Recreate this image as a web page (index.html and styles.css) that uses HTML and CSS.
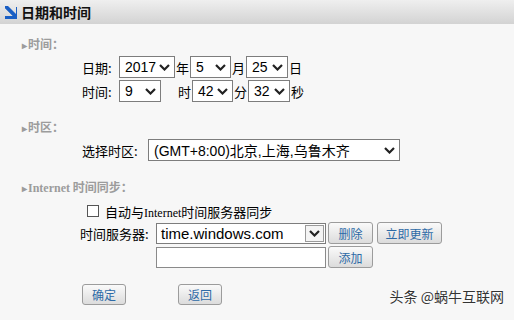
FILE: index.html
```html
<!DOCTYPE html>
<html lang="zh-CN">
  <head>
    <meta charset="UTF-8" />
    <title>日期和时间</title>
    <link rel="stylesheet" href="styles.css">
  </head>
  <body>
    <div class="header">
      <svg class="header-icon" width="12" height="13" viewBox="0 0 12 13">
        <path d="M0 0 L3 0 L11 8 L11 1 L12 1 L12 13 L0 13 L0 10 L8 10 L0 2 Z" fill="#1a5fc4" />
        <path d="M1 1 L10 10" stroke="#1a5fc4" stroke-width="3" />
      </svg>
      <span class="header-title">日期和时间</span>
    </div>

    <div class="main">
      <!-- time -->
      <div class="section-title"><span class="arrow">&#9656;</span>时间：</div>
      <div class="row first">
        <span class="label w-date">日期:</span>
        <div class="select w-56"><span>2017</span><svg class="chev" width="11" height="7" viewBox="0 0 11 7"><path d="M1 1 L5.5 5.5 L10 1" /></svg></div>
        <span class="unit">年</span>
        <div class="select w-41"><span>5</span><svg class="chev" width="11" height="7" viewBox="0 0 11 7"><path d="M1 1 L5.5 5.5 L10 1" /></svg></div>
        <span class="unit">月</span>
        <div class="select w-42"><span>25</span><svg class="chev" width="11" height="7" viewBox="0 0 11 7"><path d="M1 1 L5.5 5.5 L10 1" /></svg></div>
        <span class="unit">日</span>
      </div>
      <div class="row second">
        <span class="label w-date">时间:</span>
        <div class="select w-42"><span>9</span><svg class="chev" width="11" height="7" viewBox="0 0 11 7"><path d="M1 1 L5.5 5.5 L10 1" /></svg></div>
        <span class="unit spaced">时</span>
        <div class="select w-41"><span>42</span><svg class="chev" width="11" height="7" viewBox="0 0 11 7"><path d="M1 1 L5.5 5.5 L10 1" /></svg></div>
        <span class="unit">分</span>
        <div class="select w-42"><span>32</span><svg class="chev" width="11" height="7" viewBox="0 0 11 7"><path d="M1 1 L5.5 5.5 L10 1" /></svg></div>
        <span class="unit">秒</span>
      </div>

      <!-- time zone -->
      <div class="section-title zone"><span class="arrow">&#9656;</span>时区：</div>
      <div class="row first">
        <span class="label w-zone">选择时区:</span>
        <div class="select w-252"><span>(GMT+8:00)北京,上海,乌鲁木齐</span><svg class="chev" width="11" height="7" viewBox="0 0 11 7"><path d="M1 1 L5.5 5.5 L10 1" /></svg></div>
      </div>

      <!-- internet sync -->
      <div class="section-title sync"><span class="arrow">&#9656;</span><span class="serif">Internet</span> 时间同步：</div>
      <label class="check-row">
        <span class="checkbox"></span>
        <span>自动与<span class="serif small">Internet</span>时间服务器同步</span>
      </label>
      <div class="row server">
        <span class="label w-server">时间服务器:</span>
        <div class="combo">
          <span>time.windows.com</span>
          <span class="combo-btn"><svg class="chev" width="11" height="7" viewBox="0 0 11 7"><path d="M1 1 L5.5 5.5 L10 1" /></svg></span>
        </div>
        <button class="btn w-45">删除</button>
        <button class="btn w-65">立即更新</button>
      </div>
      <div class="row add">
        <input class="text-input" type="text" />
        <button class="btn w-45">添加</button>
      </div>

      <div class="actions">
        <button class="btn w-44">确定</button>
        <button class="btn w-44">返回</button>
      </div>
    </div>

    <div class="watermark">头条 @蜗牛互联网</div>
  </body>
</html>
```

FILE: styles.css
```css
body {
  margin: 0;
  background-color: #f7f7f7;
  font-family: "Noto Sans CJK SC", "Liberation Sans", sans-serif;
  font-size: 13px;
  color: #000;
  width: 514px;
  height: 320px;
  overflow: hidden;
  position: relative;
}

.header {
  height: 24px;
  display: flex;
  align-items: center;
  padding-left: 5px;
  gap: 4px;
  background: linear-gradient(#efefef, #d3d3d3);
}

.header-title {
  font-size: 14px;
  font-weight: bold;
  color: #111;
}

.main {
  padding-top: 12px;
}

.section-title {
  margin-left: 22px;
  height: 16px;
  line-height: 16px;
  font-size: 12px;
  font-weight: bold;
  color: #9c9c9c;
  white-space: nowrap;
}

.section-title .arrow {
  font-size: 10px;
  margin-right: 1px;
}

.section-title.zone {
  margin-top: 17px;
}

.section-title.sync {
  margin-top: 18px;
}

.serif {
  font-family: "Liberation Serif", serif;
}

.serif.small {
  font-size: 12px;
  font-weight: normal;
  color: #000;
}

.row {
  display: flex;
  align-items: center;
  height: 22px;
  padding-left: 82px;
  white-space: nowrap;
}

.row.first {
  margin-top: 4px;
}

.row.second {
  margin-top: 2px;
}

.label {
  flex: none;
}

.w-date { width: 37px; }
.w-zone { width: 66px; }
.w-server { width: 76px; }

.row.server {
  margin-top: 3px;
  padding-left: 80px;
}

.row.add {
  margin-top: 2px;
  padding-left: 156px;
}

.select {
  box-sizing: border-box;
  flex: none;
  height: 22px;
  display: flex;
  align-items: center;
  justify-content: space-between;
  padding: 0 4px 0 5px;
  background: #fff;
  border: 1px solid #7d7d7d;
  font-family: "Liberation Sans", "Noto Sans CJK SC", sans-serif;
  font-size: 14px;
}

.chev {
  flex: none;
}

.chev path {
  fill: none;
  stroke: #222;
  stroke-width: 2.2;
}

.w-41 { width: 41px; }
.w-42 { width: 42px; }
.w-56 { width: 56px; }
.w-252 { width: 252px; }

.unit {
  flex: none;
  width: 15px;
  text-align: center;
}

.unit.spaced {
  margin-left: 16px;
}

.check-row {
  display: flex;
  align-items: center;
  gap: 6px;
  height: 16px;
  margin-top: 8px;
  padding-left: 87px;
  white-space: nowrap;
}

.checkbox {
  box-sizing: border-box;
  width: 12px;
  height: 12px;
  border: 1px solid #555;
  background: #fff;
}

.combo {
  box-sizing: border-box;
  flex: none;
  width: 170px;
  height: 21px;
  display: flex;
  align-items: center;
  justify-content: space-between;
  padding: 0 1px 0 4px;
  background: #fff;
  border: 1px solid #7d7d7d;
  font-family: "Liberation Sans", sans-serif;
  font-size: 15px;
}

.combo-btn {
  box-sizing: border-box;
  width: 19px;
  height: 17px;
  display: flex;
  align-items: center;
  justify-content: center;
  border: 1px solid #9a9a9a;
  background: #f4f4f4;
}

.text-input {
  box-sizing: border-box;
  width: 170px;
  height: 21px;
  margin: 0;
  border: 1px solid #8a8a8a;
  background: #fff;
}

.btn {
  box-sizing: border-box;
  flex: none;
  height: 22px;
  margin: 0 0 0 2px;
  padding: 0;
  border: 1px solid #9c9c9c;
  border-radius: 3px;
  background: linear-gradient(#fafafa, #dcdcdc);
  color: #2d6aa6;
  font-family: "Noto Sans CJK SC", sans-serif;
  font-size: 12px;
}

.row.server .btn + .btn {
  margin-left: 4px;
}

.w-44 { width: 44px; }
.w-45 { width: 45px; }
.w-65 { width: 65px; }

.actions {
  display: flex;
  gap: 52px;
  margin-top: 16px;
  padding-left: 82px;
}

.actions .btn {
  height: 21px;
  margin: 0;
}

.watermark {
  position: absolute;
  right: 10px;
  bottom: 14px;
  font-size: 14px;
  color: #333;
  text-shadow: 0 0 2px #fff, 0 0 2px #fff;
}
```
